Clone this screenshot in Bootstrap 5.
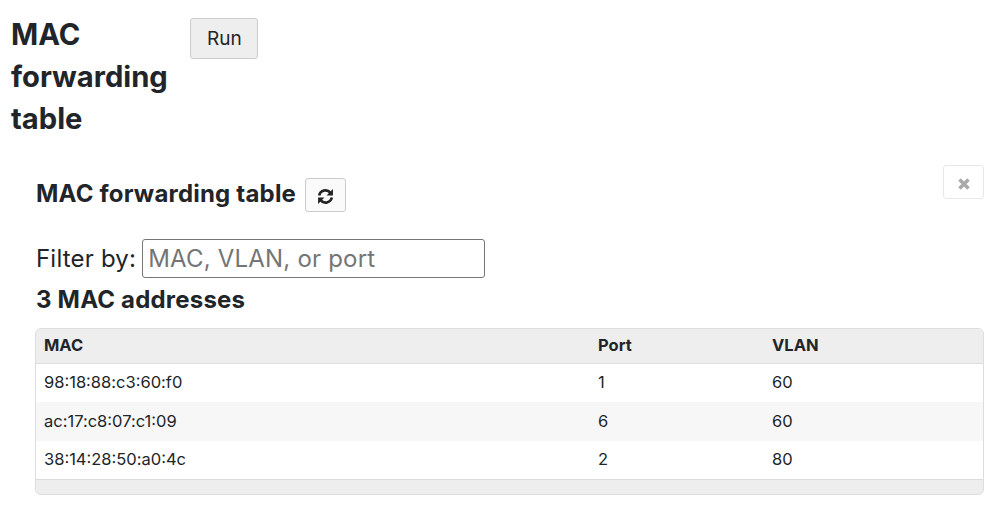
<!DOCTYPE html>
<html lang="en"><head><meta charset="utf-8">
<link href="https://cdn.jsdelivr.net/npm/bootstrap@5.3.0/dist/css/bootstrap.min.css" rel="stylesheet">
<style>
html,body{height:506px;overflow:hidden}
body{font-family:Inter,sans-serif;color:#212529;background:#fff}
.top-area{padding:14px 11px 0;gap:22px;align-items:flex-start}
.main-title{font-size:29.2px;font-weight:700;line-height:42px;width:157px;margin:0;flex:none}
.run-btn{margin-top:4px;font-size:19px;line-height:27px;padding:6px 16px;width:68px;background:#eee;border:1px solid #ccc;color:#212529;border-radius:3px}
.panel-area{padding:37px 16px 0 35px;position:relative}
.sub-title{font-size:24px;letter-spacing:.2px;font-weight:700;line-height:34px;margin:0 0 2px 1px}
.refresh-btn{width:41px;height:34px;padding:0;background:#fafafa;border:1px solid #ccc;border-radius:3px;margin-left:9px}
.close-btn{position:absolute;right:16px;top:25px;width:41px;height:34px;padding:0;background:#fff;border:1px solid #e8e8e8;border-radius:3px}
.filter-row{margin-top:26px;margin-left:1px;font-size:24px;letter-spacing:.2px;line-height:39px;gap:6px}
.filter-box{width:343px;height:39px;border:1px solid #767676;border-radius:3px;font-size:24px;letter-spacing:.2px;padding:0 5px;color:#212529;font-family:inherit}
.filter-box::placeholder{color:#757575;opacity:1}
.count-title{font-size:24px;letter-spacing:.2px;font-weight:700;line-height:34px;margin:5px 0 11px 1px}
.table-box{border:1px solid #ddd;border-radius:6px;overflow:hidden;background:#eee;padding-bottom:14px}
.mac-table{width:100%;margin:0;font-size:16.5px;table-layout:fixed;border-collapse:collapse}
.mac-table th{background:#eee;font-weight:700;height:34px;padding:0 8px;border-bottom:1px solid #ddd;vertical-align:middle}
.mac-table td{height:39px;padding:0 8px;background:#fff;border:0;vertical-align:middle}
.mac-table tr:nth-child(2) td{background:#f7f7f7}
.mac-table tr:last-child td{height:38px;border-bottom:1px solid #ddd}
.c1{width:554px}.c2{width:174px}
</style></head><body>
<div class="d-flex top-area">
<h1 class="main-title">MAC forwarding table</h1>
<button class="btn run-btn" type="button">Run</button>
</div>
<div class="panel-area">
<button class="btn close-btn" type="button" aria-label="Close"><svg width="14" height="14" viewBox="0 0 14 14"><path d="M2.5 2.5l9 9M11.5 2.5l-9 9" stroke="#aaa" stroke-width="3.6" fill="none"/></svg></button>
<div class="d-flex align-items-center">
<h2 class="sub-title">MAC forwarding table</h2>
<button class="btn refresh-btn" type="button" aria-label="Refresh"><svg width="17" height="17" viewBox="0 0 16 16" fill="none" stroke="#222" stroke-width="2.4"><path d="M2 7A6 6 0 0 1 12.6 4.6"/><path d="M14 9A6 6 0 0 1 3.4 11.4"/><path d="M15 1V7H9z" fill="#222" stroke="none"/><path d="M1 15V9H7z" fill="#222" stroke="none"/></svg></button>
</div>
<div class="d-flex filter-row"><span>Filter by:</span><input class="filter-box" placeholder="MAC, VLAN, or port"></div>
<h3 class="count-title">3 MAC addresses</h3>
<div class="table-box">
<table class="table mac-table">
<thead><tr><th class="c1">MAC</th><th class="c2">Port</th><th>VLAN</th></tr></thead>
<tbody>
<tr><td>98:18:88:c3:60:f0</td><td>1</td><td>60</td></tr>
<tr><td>ac:17:c8:07:c1:09</td><td>6</td><td>60</td></tr>
<tr><td>38:14:28:50:a0:4c</td><td>2</td><td>80</td></tr>
</tbody></table>
</div>
</div>
<script src="https://cdn.jsdelivr.net/npm/bootstrap@5.3.0/dist/js/bootstrap.bundle.min.js"></script>
</body></html>
